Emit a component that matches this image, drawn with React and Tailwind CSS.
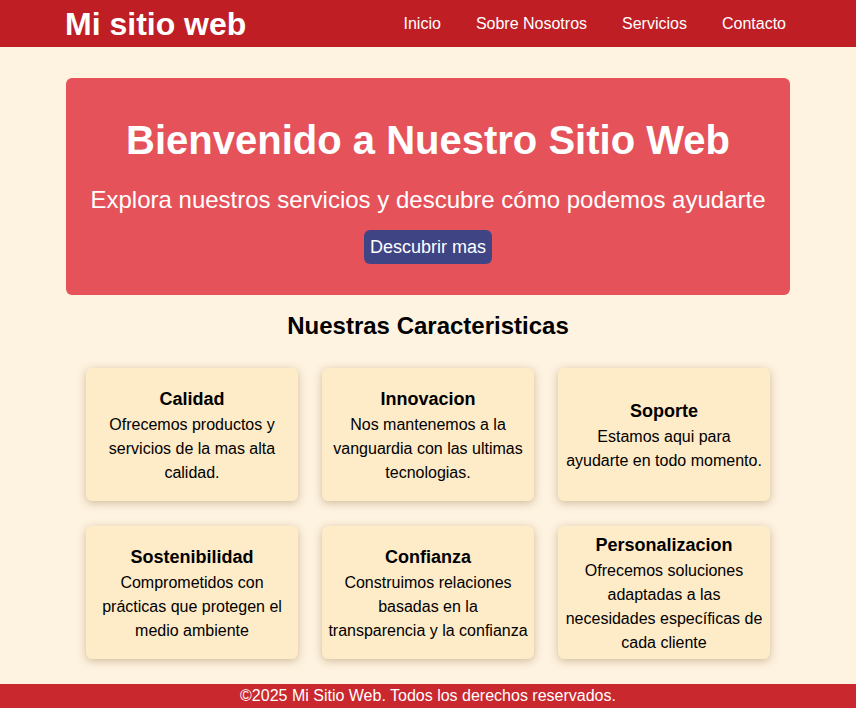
export default function App() {
  const features = [
    { title: "Calidad", lines: ["Ofrecemos productos y", "servicios de la mas alta", "calidad."] },
    { title: "Innovacion", lines: ["Nos mantenemos a la", "vanguardia con las ultimas", "tecnologias."] },
    { title: "Soporte", lines: ["Estamos aqui para", "ayudarte en todo momento."] },
    { title: "Sostenibilidad", lines: ["Comprometidos con", "prácticas que protegen el", "medio ambiente"] },
    { title: "Confianza", lines: ["Construimos relaciones", "basadas en la", "transparencia y la confianza"] },
    { title: "Personalizacion", lines: ["Ofrecemos soluciones", "adaptadas a las", "necesidades específicas de", "cada cliente"] },
  ];

  return (
    <div className="min-h-[708px] flex flex-col bg-[#fef3e0] font-['Liberation_Sans',Arial,sans-serif] text-black">
      {/* Header */}
      <header className="h-[47px] bg-[#be1e24] text-white">
        <div className="mx-[65px] h-full flex items-center justify-between">
          <h1 className="text-[32px] font-bold leading-none">Mi sitio web</h1>
          <nav className="flex gap-[35px] text-base mr-[5px]">
            <a>Inicio</a>
            <a>Sobre Nosotros</a>
            <a>Servicios</a>
            <a>Contacto</a>
          </nav>
        </div>
      </header>

      <main className="flex-1 mx-[66px] pt-[31px]">
        {/* Hero */}
        <section className="h-[217px] rounded-md bg-[#e5525a] text-white flex flex-col items-center pt-[36px]">
          <h2 className="text-[40px] font-bold leading-[52px]">Bienvenido a Nuestro Sitio Web</h2>
          <p className="text-[24px] leading-[30px] mt-[19px]">
            Explora nuestros servicios y descubre cómo podemos ayudarte
          </p>
          <button className="mt-[15px] h-[34px] px-[6px] rounded-md bg-[#3f4584] text-[18px] text-white">
            Descubrir mas
          </button>
        </section>

        {/* Features */}
        <h2 className="text-[24px] font-bold text-center mt-[16px] leading-[30px]">Nuestras Caracteristicas</h2>
        <div className="grid grid-cols-3 gap-x-[24px] gap-y-[25px] px-[20px] mt-[27px]">
          {features.map((f) => (
            <div
              key={f.title}
              className="h-[133px] rounded-md bg-[#feebc8] shadow-[0_2px_8px_rgba(120,80,30,0.35)] flex flex-col items-center justify-center px-[4px] text-center"
            >
              <h3 className="text-[18px] font-bold leading-[28px]">{f.title}</h3>
              <p className="text-base leading-[24px]">
                {f.lines.map((l) => (
                  <span key={l} className="block whitespace-nowrap">
                    {l}
                  </span>
                ))}
              </p>
            </div>
          ))}
        </div>
      </main>

      <footer className="mt-[24px] h-[24px] bg-[#c8282e] text-white text-base flex items-center justify-center">
        ©2025 Mi Sitio Web. Todos los derechos reservados.
      </footer>
    </div>
  );
}
